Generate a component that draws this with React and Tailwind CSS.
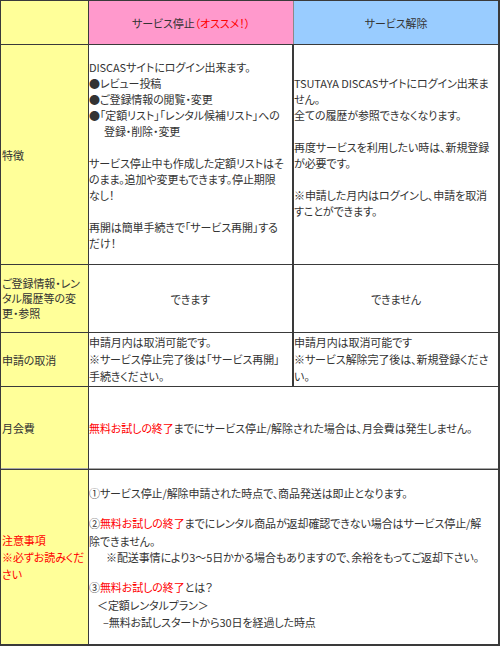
import React from 'react';

const Red = ({ children }) => <span className="text-[#ff0000]">{children}</span>;

function Cell({ className = '', children }) {
  return (
    <div className={`flex flex-col justify-center overflow-hidden whitespace-nowrap bg-white ${className}`}>
      {children}
    </div>
  );
}

function Label({ className = '', children }) {
  return (
    <div className={`flex flex-col justify-center overflow-hidden whitespace-nowrap bg-[#ffff99] pl-px ${className}`}>
      {children}
    </div>
  );
}

export default function App() {
  return (
    <div className="w-[500px] h-[646px] bg-[#3a3a3a] pt-px pl-px pr-[2px] pb-[2px] font-['Noto_Sans_CJK_JP',sans-serif] [font-feature-settings:'palt'] text-[11px] leading-[16px] tracking-[-0.1px] text-[#333333]">
      <div className="grid h-full grid-cols-[87px_204px_204px] grid-rows-[43px_219px_67px_53px_82px_174px] gap-px">
        {/* header */}
        <div className="bg-[#ffff99]" />
        <div className="flex items-center justify-center bg-[#ff99cc]">
          サービス停止<Red>（オススメ！）</Red>
        </div>
        <div className="-ml-px flex items-center justify-center border-l border-[#8a8a8a] bg-[#99ccff]">サービス解除</div>

        {/* 特徴 */}
        <Label>特徴</Label>
        <Cell className="border-r border-[#3a3a3a]">
          <div>DISCASサイトにログイン出来ます。</div>
          <div>●レビュー投稿</div>
          <div>●ご登録情報の閲覧・変更</div>
          <div>●「定額リスト」「レンタル候補リスト」への</div>
          <div className="pl-[15px]">登録・削除・変更</div>
          <div className="h-[16px]" />
          <div>サービス停止中も作成した定額リストはそ</div>
          <div>のまま。追加や変更もできます。停止期限</div>
          <div>なし！</div>
          <div className="h-[16px]" />
          <div>再開は簡単手続きで「サービス再開」する</div>
          <div>だけ！</div>
        </Cell>
        <Cell>
          <div>TSUTAYA DISCASサイトにログイン出来ま</div>
          <div>せん。</div>
          <div>全ての履歴が参照できなくなります。</div>
          <div className="h-[16px]" />
          <div>再度サービスを利用したい時は、新規登録</div>
          <div>が必要です。</div>
          <div className="h-[16px]" />
          <div>※申請した月内はログインし、申請を取消</div>
          <div>すことができます。</div>
          <div className="h-[16px]" />
        </Cell>

        {/* ご登録情報 */}
        <Label className="leading-[15px]">
          <div>ご登録情報・レン</div>
          <div>タル履歴等の変</div>
          <div>更・参照</div>
        </Label>
        <Cell className="items-center border-r border-[#3a3a3a]">できます</Cell>
        <Cell className="items-center">できません</Cell>

        {/* 申請の取消 */}
        <Label>申請の取消</Label>
        <Cell className="border-r border-[#3a3a3a] leading-[17px]">
          <div>申請月内は取消可能です。</div>
          <div>※サービス停止完了後は「サービス再開」</div>
          <div>手続きください。</div>
        </Cell>
        <Cell className="leading-[17px]">
          <div>申請月内は取消可能です</div>
          <div>※サービス解除完了後は、新規登録くださ</div>
          <div>い。</div>
        </Cell>

        {/* 月会費 */}
        <Label className="border-b border-[#a8a8a8]">月会費</Label>
        <Cell className="col-span-2 border-b border-[#a8a8a8]">
          <div>
            <Red>無料お試しの終了</Red>までにサービス停止/解除された場合は、月会費は発生しません。
          </div>
        </Cell>

        {/* 注意事項 */}
        <Label className="leading-[17px] text-[#ff0000]">
          <div>注意事項</div>
          <div>※必ずお読みくだ</div>
          <div>さい</div>
        </Label>
        <Cell className="col-span-2">
          <div>①サービス停止/解除申請された時点で、商品発送は即止となります。</div>
          <div className="mt-[14px]">
            ②<Red>無料お試しの終了</Red>までにレンタル商品が返却確認できない場合はサービス停止/解
          </div>
          <div className="mt-[2px]">除できません。</div>
          <div className="pl-[17px]">※配送事情により3～5日かかる場合もありますので、余裕をもってご返却下さい。</div>
          <div className="mt-[14px]">
            ③<Red>無料お試しの終了</Red>とは？
          </div>
          <div className="mt-[2px] pl-[8px]">＜定額レンタルプラン＞</div>
          <div className="mt-px pl-[14px]">–無料お試しスタートから30日を経過した時点</div>
        </Cell>
      </div>
    </div>
  );
}
